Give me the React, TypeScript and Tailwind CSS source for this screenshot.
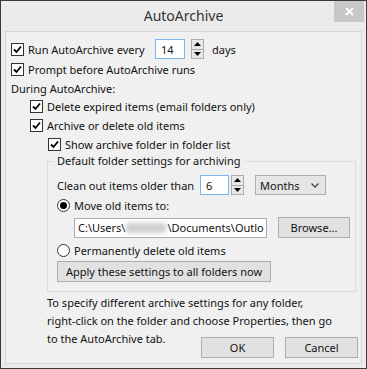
import React from "react";

function Check({ checked = true }: { checked?: boolean }) {
  return (
    <span className="flex h-[13px] w-[13px] shrink-0 items-center justify-center border border-[#333] bg-white">
      {checked && (
        <svg width="9" height="9" viewBox="0 0 9 9">
          <path d="M1 4.5 L3.5 7 L8 1.5" fill="none" stroke="#000" strokeWidth="1.8" />
        </svg>
      )}
    </span>
  );
}

function Radio({ checked }: { checked?: boolean }) {
  return (
    <span className="flex h-[13px] w-[13px] shrink-0 items-center justify-center rounded-full border border-[#333] bg-white">
      {checked && <span className="h-[7px] w-[7px] rounded-full bg-black" />}
    </span>
  );
}

function Spin() {
  return (
    <span className="ml-[2px] flex h-[20px] w-[13px] shrink-0 flex-col border border-[#adadad] bg-[#e8e8e8]">
      <span className="flex flex-1 items-center justify-center border-b border-[#adadad]">
        <svg width="7" height="4" viewBox="0 0 7 4"><path d="M0 4 L3.5 0 L7 4 Z" fill="#000" /></svg>
      </span>
      <span className="flex flex-1 items-center justify-center">
        <svg width="7" height="4" viewBox="0 0 7 4"><path d="M0 0 L3.5 4 L7 0 Z" fill="#000" /></svg>
      </span>
    </span>
  );
}

function Btn({ children, className = "" }: { children: React.ReactNode; className?: string }) {
  return (
    <span className={`flex shrink-0 items-center justify-center border border-[#adadad] bg-[#e1e1e1] ${className}`}>
      {children}
    </span>
  );
}

export default function App() {
  return (
    <div
      className="relative h-[369px] w-[367px] whitespace-nowrap border border-[#3a3a3a] bg-[#ebebeb] text-[11px] leading-none text-[#111]"
      style={{ fontFamily: '"Noto Sans", "Segoe UI", sans-serif' }}
    >
      {/* title bar */}
      <div className="flex h-[30px] items-center justify-center text-[14px] text-[#333]">AutoArchive</div>
      <div className="absolute right-[2px] top-0 flex h-[21px] w-[30px] items-center justify-center bg-[#c7c7c7]">
        <svg width="9" height="9" viewBox="0 0 9 9">
          <path d="M1 1 L8 8 M8 1 L1 8" stroke="#fff" strokeWidth="1.8" />
        </svg>
      </div>

      {/* client */}
      <div className="mx-[4px] h-[333px] border border-[#d6d6d6] bg-[#f0f0f0] pl-[5px] pr-[3px] pt-[7px]">
        <div className="flex h-[20px] items-center gap-[4px]">
          <Check />
          <span className="w-[123px]">Run AutoArchive every</span>
          <span className="flex h-[20px] w-[30px] items-center border border-[#7eb4ea] bg-white pl-[5px]">14</span>
          <Spin />
          <span className="ml-[4px]">days</span>
        </div>
        <div className="flex h-[20px] items-center gap-[4px]">
          <Check />
          <span>Prompt before AutoArchive runs</span>
        </div>
        <div className="flex h-[18px] items-center">During AutoArchive:</div>
        <div className="flex h-[19px] items-center gap-[4px] pl-[19px]">
          <Check />
          <span>Delete expired items (email folders only)</span>
        </div>
        <div className="flex h-[19px] items-center gap-[4px] pl-[19px]">
          <Check />
          <span>Archive or delete old items</span>
        </div>
        <div className="flex h-[19px] items-center gap-[4px] pl-[37px]">
          <Check />
          <span>Show archive folder in folder list</span>
        </div>

        {/* group */}
        <div className="relative ml-[36px] mr-[2px] mt-[7px] h-[131px] border border-[#dcdcdc] pl-[9px] pt-[13px]">
          <span className="absolute -top-[7px] left-[6px] bg-[#f0f0f0] px-[3px]">Default folder settings for archiving</span>
          <div className="flex h-[20px] items-center">
            <span className="w-[143px]">Clean out items older than</span>
            <span className="flex h-[20px] w-[29px] items-center border border-[#7eb4ea] bg-white pl-[5px]">6</span>
            <Spin />
            <span className="ml-[11px] flex h-[20px] w-[71px] items-center justify-between border border-[#acacac] bg-[#e5e5e5] pl-[4px] pr-[6px]">
              Months
              <svg width="8" height="5" viewBox="0 0 8 5"><path d="M0.5 0.5 L4 4 L7.5 0.5" fill="none" stroke="#444" strokeWidth="1.3" /></svg>
            </span>
          </div>
          <div className="flex h-[21px] items-center gap-[4px]">
            <Radio checked />
            <span>Move old items to:</span>
          </div>
          <div className="mt-[1px] flex items-center">
            <span className="ml-[17px] flex h-[20px] w-[193px] items-center overflow-hidden border border-[#abadb3] bg-white pl-[3px]">
              C:\Users\
              <span className="mx-[1px] inline-block h-[10px] w-[40px] shrink-0 bg-[#cfcfcf] blur-[2px]" />
              \Documents\Outlo
            </span>
            <Btn className="ml-[11px] h-[21px] w-[72px]">Browse...</Btn>
          </div>
          <div className="mt-[2px] flex h-[20px] items-center gap-[4px]">
            <Radio />
            <span>Permanently delete old items</span>
          </div>
          <Btn className="mt-[1px] h-[21px] w-[214px]">Apply these settings to all folders now</Btn>
        </div>

        <div className="ml-[36px] mt-[2px] leading-[18px]">
          To specify different archive settings for any folder,
          <br />
          right-click on the folder and choose Properties, then go
          <br />
          to the AutoArchive tab.
        </div>
        <div className="-mt-[11px] flex justify-end gap-[11px]">
          <Btn className="h-[21px] w-[73px]">OK</Btn>
          <Btn className="h-[21px] w-[73px]">Cancel</Btn>
        </div>
      </div>
    </div>
  );
}
